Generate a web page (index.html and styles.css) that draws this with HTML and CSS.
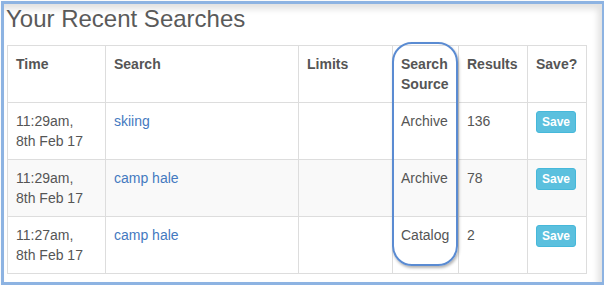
FILE: index.html
```html
<!DOCTYPE html>
<html>
<head>
<meta charset="utf-8">
<link rel="stylesheet" href="styles.css">
</head>
<body>
<div class="frame">
  <h3 class="title">Your Recent Searches</h3>
  <table class="searches">
    <colgroup>
      <col class="c-time"><col class="c-search"><col class="c-limits"><col class="c-source"><col class="c-results"><col class="c-save">
    </colgroup>
    <thead>
      <tr><th>Time</th><th>Search</th><th>Limits</th><th>Search Source</th><th>Results</th><th>Save?</th></tr>
    </thead>
    <tbody>
      <tr><td>11:29am,<br>8th Feb 17</td><td><a href="#">skiing</a></td><td></td><td>Archive</td><td>136</td><td><button class="btn-save">Save</button></td></tr>
      <tr class="striped"><td>11:29am,<br>8th Feb 17</td><td><a href="#">camp hale</a></td><td></td><td>Archive</td><td>78</td><td><button class="btn-save">Save</button></td></tr>
      <tr><td>11:27am,<br>8th Feb 17</td><td><a href="#">camp hale</a></td><td></td><td>Catalog</td><td>2</td><td><button class="btn-save">Save</button></td></tr>
    </tbody>
  </table>
  <div class="highlight"></div>
</div>
</body>
</html>
```
FILE: styles.css
```css
html, body {
  margin: 0;
  padding: 0;
  background: #ffffff;
}
body {
  font-family: "Liberation Sans", Arial, sans-serif;
  font-size: 14px;
  color: #555;
}
.frame {
  position: relative;
  margin: 1px 0 0 1px;
  width: 595px;
  height: 278px;
  padding: 0 0 0 3px;
  border: 3px solid #8db3e2;
  background: #fff;
  box-shadow: 2px 2px 3px rgba(0,0,0,0.35), inset -4px 5px 6px rgba(0,0,0,0.12);
}
.title {
  margin: 1px 0 13px -1px;
  font-size: 24px;
  line-height: 27px;
  font-weight: normal;
  color: #5a5a5a;
}
.searches {
  border-collapse: collapse;
  table-layout: fixed;
  width: 579px;
  border: 1px solid #ddd;
}
.c-time { width: 98px; }
.c-search { width: 193px; }
.c-limits { width: 94px; }
.c-source { width: 66px; }
.c-results { width: 69px; }
.c-save { width: 59px; }
.searches th, .searches td {
  border: 1px solid #ddd;
  padding: 8px;
  line-height: 20px;
  vertical-align: top;
  text-align: left;
}
.searches th {
  font-weight: bold;
  color: #555;
}
.searches td {
  color: #555;
}
.searches tr.striped td {
  background: #f9f9f9;
}
.searches a {
  color: #4479c0;
  text-decoration: none;
}
.btn-save {
  display: inline-block;
  font-family: "Liberation Sans", Arial, sans-serif;
  font-size: 12px;
  font-weight: bold;
  line-height: 18px;
  padding: 1px 5px;
  border: 1px solid #46b8da;
  border-radius: 3px;
  background: #5bc0de;
  color: #fff;
  margin: 0;
}
.highlight {
  position: absolute;
  left: 388px;
  top: 38px;
  width: 62px;
  height: 220px;
  border: 2px solid #5a8bd2;
  border-radius: 20px;
  box-shadow: 1px 2px 3px rgba(0,0,0,0.3);
  pointer-events: none;
}
```
